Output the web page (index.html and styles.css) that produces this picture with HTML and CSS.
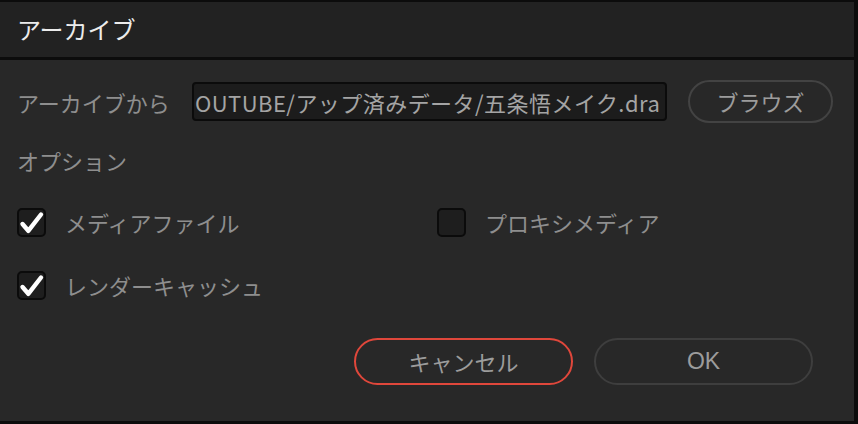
FILE: index.html
```html
<!DOCTYPE html>
<html lang="ja">
<head>
<meta charset="utf-8">
<title>アーカイブ</title>
<link rel="stylesheet" href="styles.css">
</head>
<body>
<div class="dialog">
  <div class="titlebar">アーカイブ</div>
  <div class="content">
    <div class="source-row">
      <span class="label source-label">アーカイブから</span>
      <div class="path-field"><span class="path-text">OUTUBE/アップ済みデータ/五条悟メイク.dra</span></div>
      <button class="btn btn-browse">ブラウズ</button>
    </div>
    <div class="label section-title">オプション</div>
    <div class="options">
      <label class="option">
        <span class="checkbox checked">
          <svg width="29" height="29" viewBox="0 0 29 29"><path d="M5.5 16 L11.3 22.8 L24 6.5" fill="none" stroke="#fff" stroke-width="4.4" stroke-linecap="round" stroke-linejoin="round"/></svg>
        </span>
        <span class="label">メディアファイル</span>
      </label>
      <label class="option">
        <span class="checkbox"></span>
        <span class="label">プロキシメディア</span>
      </label>
      <label class="option">
        <span class="checkbox checked">
          <svg width="29" height="29" viewBox="0 0 29 29"><path d="M5.5 16 L11.3 22.8 L24 6.5" fill="none" stroke="#fff" stroke-width="4.4" stroke-linecap="round" stroke-linejoin="round"/></svg>
        </span>
        <span class="label">レンダーキャッシュ</span>
      </label>
    </div>
    <div class="actions">
      <button class="btn btn-cancel">キャンセル</button>
      <button class="btn btn-ok">OK</button>
    </div>
  </div>
</div>
</body>
</html>
```
FILE: styles.css
```css
html, body {
  margin: 0;
  padding: 0;
  background: #0c0c0c;
}
body {
  width: 858px;
  height: 424px;
  overflow: hidden;
  font-family: "Noto Sans CJK JP", "Noto Sans", sans-serif;
}
.dialog {
  box-sizing: border-box;
  width: 858px;
  height: 424px;
  border-top: 2px solid #0c0c0c;
  border-right: 4px solid #0c0c0c;
  border-bottom: 3px solid #0c0c0c;
  background: #282828;
  display: flex;
  flex-direction: column;
}
.titlebar {
  box-sizing: border-box;
  background: #222222;
  border-bottom: 3px solid #0c0c0c;
  height: 58px;
  padding-left: 17px;
  display: flex;
  align-items: center;
  padding-bottom: 2px;
  color: #ececec;
  font-size: 24px;
  line-height: 1;
}
.content {
  flex: 1;
  padding: 20px 21px 0 17px;
  display: flex;
  flex-direction: column;
}
.label {
  color: #8e8e8e;
  font-size: 22px;
  line-height: 30px;
}
.source-row {
  display: flex;
  align-items: center;
  height: 43px;
}
.source-label {
  width: 175px;
  flex: none;
}
.path-field {
  box-sizing: border-box;
  width: 475px;
  height: 39px;
  flex: none;
  background: #1c1c1c;
  border: 2px solid #0b0b0b;
  border-radius: 4px;
  overflow: hidden;
  display: flex;
  align-items: center;
  padding-left: 1px;
}
.path-text {
  white-space: nowrap;
  color: #a4a4a4;
  font-size: 22px;
  letter-spacing: 0.45px;
  line-height: 30px;
}
.btn {
  font-family: "Noto Sans CJK JP", "Noto Sans", sans-serif;
  background: transparent;
  color: #9c9c9c;
  font-size: 22px;
  line-height: 1;
  border-radius: 999px;
  box-sizing: border-box;
  padding: 0 0 2px 0;
  margin: 0;
  cursor: pointer;
}
.btn-browse {
  margin-left: 21px;
  width: 145px;
  height: 43px;
  flex: none;
  border: 2px solid #434343;
}
.section-title {
  margin-top: 22px;
}
.options {
  margin-top: 33px;
  display: grid;
  grid-template-columns: 420px 1fr;
  row-gap: 34px;
}
.option {
  display: flex;
  align-items: center;
  gap: 19px;
  height: 29px;
}
.option .label {
  margin-top: -2px;
}
.checkbox {
  box-sizing: border-box;
  width: 29px;
  height: 29px;
  flex: none;
  background: #1e1e1e;
  border: 2px solid #0b0b0b;
  border-radius: 5px;
  position: relative;
}
.checkbox svg {
  position: absolute;
  left: -2px;
  top: -2px;
}
.actions {
  margin-top: 38px;
  margin-right: 20px;
  display: flex;
  justify-content: flex-end;
  gap: 21px;
}
.btn-cancel, .btn-ok {
  width: 219px;
  height: 47px;
}
.btn-cancel {
  border: 2px solid #e0473b;
}
.btn-ok {
  border: 2px solid #3e3e3e;
  font-family: "Liberation Sans", "Noto Sans", sans-serif;
  font-size: 23px;
  padding-bottom: 0;
}
```
